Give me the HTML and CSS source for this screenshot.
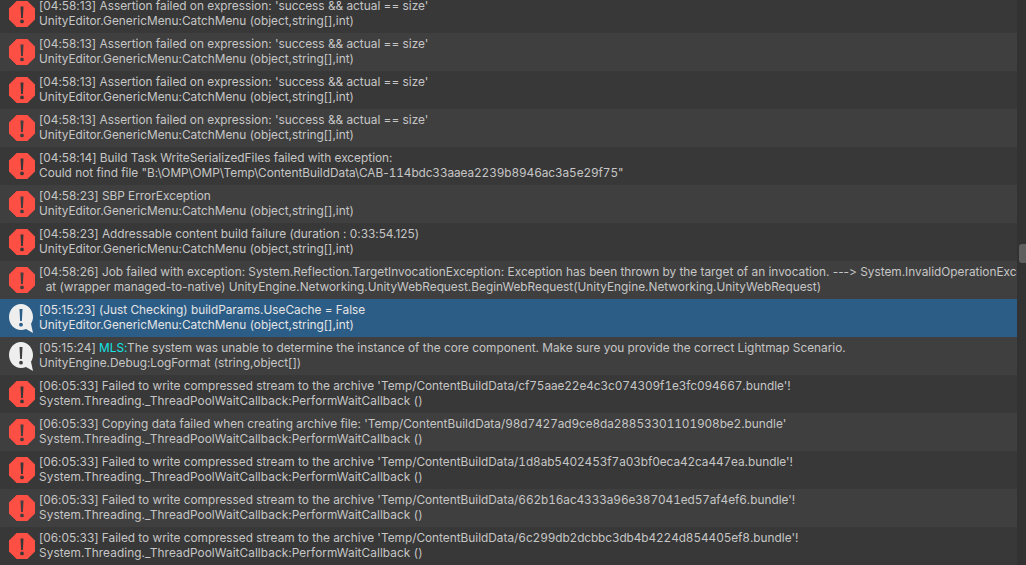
FILE: index.html
```html
<!DOCTYPE html>
<html lang="en">
<head>
<meta charset="utf-8">
<title>Console</title>
<link rel="stylesheet" href="styles.css">
</head>
<body>
<svg class="defs" width="0" height="0" aria-hidden="true">
  <symbol id="err" viewBox="0 0 26 26">
    <path fill="#fe4f45" fill-rule="evenodd" d="M7.600 0h10.800L26 7.600v10.800L18.400 26H7.600L0 18.400V7.600zM11.500 5.500l.6 11.500h1.800l.6-11.500zM13 18.500a1.900 1.900 0 1 0 0 3.800 1.900 1.900 0 0 0 0-3.800z"/>
  </symbol>
  <symbol id="info" viewBox="0 0 24 29">
    <path fill="#eeeeee" fill-rule="evenodd" d="M12 0C5.400 0 0 5.800 0 13s5.400 13 12 13c1.800 0 3.500-.4 5-1.100L24 29l-2-9.200C23.300 17.900 24 15.500 24 13 24 5.800 18.600 0 12 0zM10.500 5l.6 12h1.800l.6-12zM12 18.800a1.900 1.900 0 1 0 0 3.800 1.900 1.900 0 0 0 0-3.800z"/>
  </symbol>
</svg>
<main class="console">
  <ul class="log">
    <li class="row"><svg class="icon"><use href="#err"/></svg><p class="msg">[04:58:13] Assertion failed on expression: 'success &amp;&amp; actual == size'<br>UnityEditor.GenericMenu:CatchMenu (object,string[],int)</p></li>
    <li class="row"><svg class="icon"><use href="#err"/></svg><p class="msg">[04:58:13] Assertion failed on expression: 'success &amp;&amp; actual == size'<br>UnityEditor.GenericMenu:CatchMenu (object,string[],int)</p></li>
    <li class="row"><svg class="icon"><use href="#err"/></svg><p class="msg">[04:58:13] Assertion failed on expression: 'success &amp;&amp; actual == size'<br>UnityEditor.GenericMenu:CatchMenu (object,string[],int)</p></li>
    <li class="row"><svg class="icon"><use href="#err"/></svg><p class="msg">[04:58:13] Assertion failed on expression: 'success &amp;&amp; actual == size'<br>UnityEditor.GenericMenu:CatchMenu (object,string[],int)</p></li>
    <li class="row"><svg class="icon"><use href="#err"/></svg><p class="msg">[04:58:14] Build Task WriteSerializedFiles failed with exception:<br>Could not find file "B:\OMP\OMP\Temp\ContentBuildData\CAB-<span class="hash">114bdc33aaea2239b8946ac3a5e29f75</span>"</p></li>
    <li class="row"><svg class="icon"><use href="#err"/></svg><p class="msg">[04:58:23] SBP ErrorException<br>UnityEditor.GenericMenu:CatchMenu (object,string[],int)</p></li>
    <li class="row"><svg class="icon"><use href="#err"/></svg><p class="msg">[04:58:23] Addressable content build failure (duration : 0:33:54.125)<br>UnityEditor.GenericMenu:CatchMenu (object,string[],int)</p></li>
    <li class="row"><svg class="icon"><use href="#err"/></svg><p class="msg">[04:58:26] Job failed with exception: System.Reflection.TargetInvocationException: Exception has been thrown by the target of an invocation. ---&gt; System.InvalidOperationException<br>&nbsp;&nbsp;at (wrapper managed-to-native) UnityEngine.Networking.UnityWebRequest.BeginWebRequest(UnityEngine.Networking.UnityWebRequest)</p></li>
    <li class="row selected"><svg class="icon bubble"><use href="#info"/></svg><p class="msg">[05:15:23] (Just Checking) buildParams.UseCache = False<br>UnityEditor.GenericMenu:CatchMenu (object,string[],int)</p></li>
    <li class="row"><svg class="icon bubble"><use href="#info"/></svg><p class="msg">[05:15:24] <span class="tag">MLS:</span>The system was unable to determine the instance of the core component. Make sure you provide the correct Lightmap Scenario.<br>UnityEngine.Debug:LogFormat (string,object[])</p></li>
    <li class="row"><svg class="icon"><use href="#err"/></svg><p class="msg">[06:05:33] Failed to write compressed stream to the archive 'Temp/ContentBuildData/<span class="hash">cf75aae22e4c3c074309f1e3fc094667</span>.bundle'!<br><span class="thread">System.Threading._ThreadPoolWaitCallback:PerformWaitCallback ()</span></p></li>
    <li class="row"><svg class="icon"><use href="#err"/></svg><p class="msg">[06:05:33] Copying data failed when creating archive file: 'Temp/ContentBuildData/<span class="hash">98d7427ad9ce8da28853301101908be2</span>.bundle'<br><span class="thread">System.Threading._ThreadPoolWaitCallback:PerformWaitCallback ()</span></p></li>
    <li class="row"><svg class="icon"><use href="#err"/></svg><p class="msg">[06:05:33] Failed to write compressed stream to the archive 'Temp/ContentBuildData/<span class="hash">1d8ab5402453f7a03bf0eca42ca447ea</span>.bundle'!<br><span class="thread">System.Threading._ThreadPoolWaitCallback:PerformWaitCallback ()</span></p></li>
    <li class="row"><svg class="icon"><use href="#err"/></svg><p class="msg">[06:05:33] Failed to write compressed stream to the archive 'Temp/ContentBuildData/<span class="hash">662b16ac4333a96e387041ed57af4ef6</span>.bundle'!<br><span class="thread">System.Threading._ThreadPoolWaitCallback:PerformWaitCallback ()</span></p></li>
    <li class="row"><svg class="icon"><use href="#err"/></svg><p class="msg">[06:05:33] Failed to write compressed stream to the archive 'Temp/ContentBuildData/<span class="hash">6c299db2dcbbc3db4b4224d854405ef8</span>.bundle'!<br><span class="thread">System.Threading._ThreadPoolWaitCallback:PerformWaitCallback ()</span></p></li>
  </ul>
  <aside class="scrollbar"><div class="thumb"></div></aside>
</main>
</body>
</html>
```
FILE: styles.css
```css
* { box-sizing: border-box; }
html, body { margin: 0; height: 100%; overflow: hidden; background: #383838; }
.defs { display: block; height: 0; }
.console { display: flex; height: 565px; width: 1026px; overflow: hidden; }
.log { flex: 1; min-width: 0; margin: -5px 0 0; padding: 0; list-style: none; overflow: hidden; }
.row { display: flex; align-items: flex-start; height: 38px; background: #383838; overflow: hidden; }
.row:nth-child(even) { background: #3f3f3f; }
.row.selected { background: #2c5d87; }
.icon { flex: none; width: 26px; height: 26px; margin: 6px 4px 0 9px; }
.icon.bubble { width: 24px; height: 29px; margin: 5px 6px 0 9px; }
.msg { margin: 4px 0 0; font: 11.83px/15px Inter, "Liberation Sans", sans-serif; font-feature-settings: "calt" 0; color: #c6c6c6; white-space: nowrap; }
.selected .msg { color: #e4e4e4; }
.hash { font-feature-settings: "calt" 0, "tnum" 1; letter-spacing: -0.1px; }
.thread { letter-spacing: 0.07px; }
.tag { color: #10e6e6; }
.scrollbar { flex: none; width: 9px; padding: 244px 0 0 2px; background: #323232; }
.thumb { height: 19px; background: #5f5f5f; border-radius: 3px 0 0 3px; }
```
